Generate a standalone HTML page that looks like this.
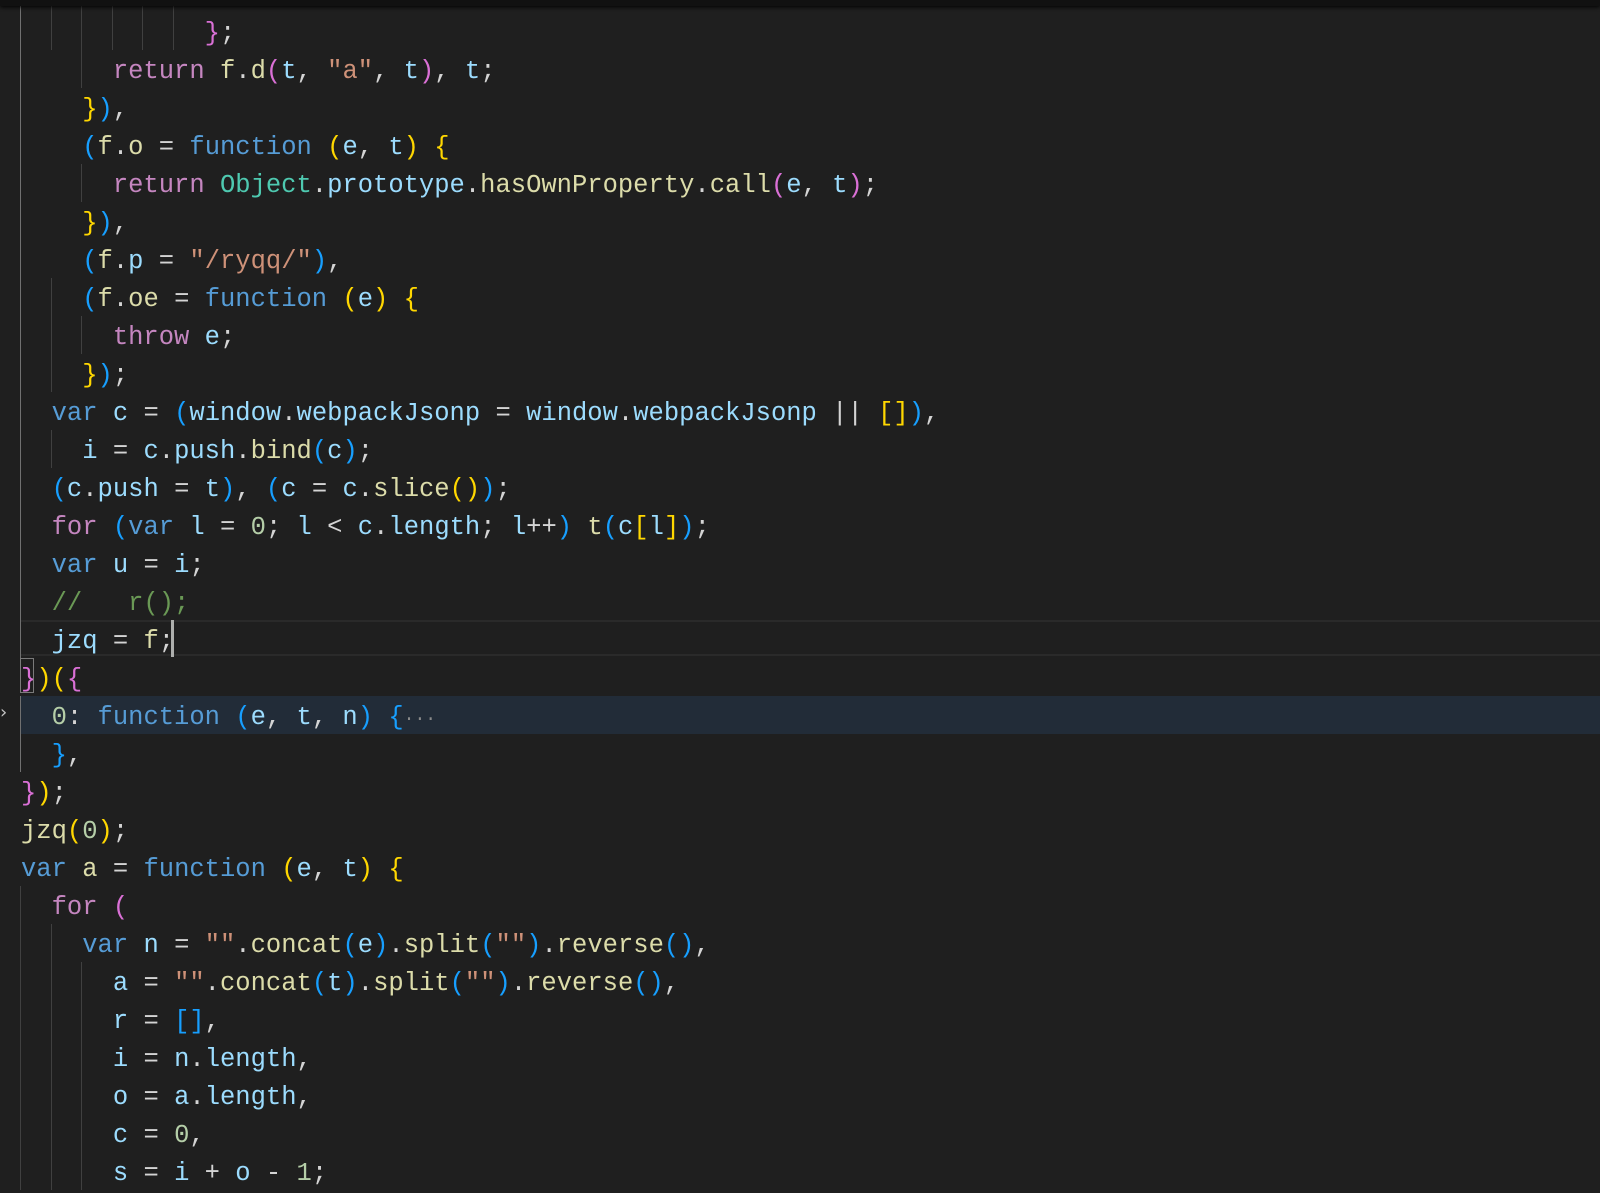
<!DOCTYPE html>
<html><head><meta charset="utf-8">
<style>
html,body{margin:0;padding:0;background:#1f1f1f;width:1600px;height:1172px;overflow:hidden}
#topbar{position:absolute;left:0;top:0;width:1600px;height:6px;background:#111;box-shadow:0 1px 4px #000}
.l{position:absolute;left:21px;height:38px;line-height:38px;font-family:"Liberation Mono",monospace;font-size:25.5px;color:#d4d4d4;white-space:pre;margin-top:3px}
.g{position:absolute;width:1px;background:#404040}
.ga{background:#707070}
.k{color:#c586c0}.s{color:#569cd6}.v{color:#9cdcfe}.f{color:#dcdcaa}.st{color:#ce9178}.n{color:#b5cea8}.c{color:#6a9955}.o{color:#4ec9b0}
.y{color:#ffd700}.p{color:#da70d6}.b{color:#179fff}
</style></head><body>
<div style="position:absolute;left:20px;top:696px;width:1580px;height:38px;background:#222c38"></div>
<div style="position:absolute;left:21px;top:620px;width:1579px;height:2px;background:#2a2a2a"></div>
<div style="position:absolute;left:21px;top:654px;width:1579px;height:2px;background:#2a2a2a"></div>
<div id="guides"></div>
<div id="code"></div>
<div style="position:absolute;left:20px;top:658px;width:12px;height:33px;border:1px solid #7a7a7a"></div>
<div style="position:absolute;left:171px;top:620px;width:3px;height:37px;background:#aeafad"></div>
<div style="position:absolute;left:0;top:702px;color:#c5c5c5;font-family:'DejaVu Sans',sans-serif;font-size:18px">›</div>
<div id="topbar"></div>
<script>
(function(){
var L=[
[[0,1,2,3,4,5],'            <span class="p">}</span>;'],
[[0,2],'      <span class="k">return</span> <span class="f">f</span>.<span class="f">d</span><span class="p">(</span><span class="v">t</span>, <span class="st">"a"</span>, <span class="v">t</span><span class="p">)</span>, <span class="v">t</span>;'],
[[0],'    <span class="y">}</span><span class="b">)</span>,'],
[[0],'    <span class="b">(</span><span class="f">f</span>.<span class="f">o</span> = <span class="s">function</span> <span class="y">(</span><span class="v">e</span>, <span class="v">t</span><span class="y">)</span> <span class="y">{</span>'],
[[0,2],'      <span class="k">return</span> <span class="o">Object</span>.<span class="v">prototype</span>.<span class="f">hasOwnProperty</span>.<span class="f">call</span><span class="p">(</span><span class="v">e</span>, <span class="v">t</span><span class="p">)</span>;'],
[[0],'    <span class="y">}</span><span class="b">)</span>,'],
[[0],'    <span class="b">(</span><span class="f">f</span>.<span class="v">p</span> = <span class="st">"/ryqq/"</span><span class="b">)</span>,'],
[[0,1],'    <span class="b">(</span><span class="f">f</span>.<span class="f">oe</span> = <span class="s">function</span> <span class="y">(</span><span class="v">e</span><span class="y">)</span> <span class="y">{</span>'],
[[0,1,2],'      <span class="k">throw</span> <span class="v">e</span>;'],
[[0,1],'    <span class="y">}</span><span class="b">)</span>;'],
[[0],'  <span class="s">var</span> <span class="v">c</span> = <span class="b">(</span><span class="v">window</span>.<span class="v">webpackJsonp</span> = <span class="v">window</span>.<span class="v">webpackJsonp</span> || <span class="y">[]</span><span class="b">)</span>,'],
[[0,1],'    <span class="v">i</span> = <span class="v">c</span>.<span class="v">push</span>.<span class="f">bind</span><span class="b">(</span><span class="v">c</span><span class="b">)</span>;'],
[[0],'  <span class="b">(</span><span class="v">c</span>.<span class="v">push</span> = <span class="v">t</span><span class="b">)</span>, <span class="b">(</span><span class="v">c</span> = <span class="v">c</span>.<span class="f">slice</span><span class="y">()</span><span class="b">)</span>;'],
[[0],'  <span class="k">for</span> <span class="b">(</span><span class="s">var</span> <span class="v">l</span> = <span class="n">0</span>; <span class="v">l</span> &lt; <span class="v">c</span>.<span class="v">length</span>; <span class="v">l</span>++<span class="b">)</span> <span class="f">t</span><span class="b">(</span><span class="v">c</span><span class="y">[</span><span class="v">l</span><span class="y">]</span><span class="b">)</span>;'],
[[0],'  <span class="s">var</span> <span class="v">u</span> = <span class="v">i</span>;'],
[[0],'  <span class="c">//   r();</span>'],
[[0],'  <span class="v">jzq</span> = <span class="f">f</span>;'],
[[],'<span class="p">}</span><span class="y">)(</span><span class="p">{</span>'],
[[0],'  <span class="n">0</span>: <span class="s">function</span> <span class="b">(</span><span class="v">e</span>, <span class="v">t</span>, <span class="v">n</span><span class="b">)</span> <span class="b">{</span><span style="color:#8a8a8a;font-size:18px">···</span>'],
[[0],'  <span class="b">}</span>,'],
[[],'<span class="p">}</span><span class="y">)</span>;'],
[[],'<span class="f">jzq</span><span class="y">(</span><span class="n">0</span><span class="y">)</span>;'],
[[],'<span class="s">var</span> <span class="f">a</span> = <span class="s">function</span> <span class="y">(</span><span class="v">e</span>, <span class="v">t</span><span class="y">)</span> <span class="y">{</span>'],
[[0],'  <span class="k">for</span> <span class="p">(</span>'],
[[0,1],'    <span class="s">var</span> <span class="v">n</span> = <span class="st">""</span>.<span class="f">concat</span><span class="b">(</span><span class="v">e</span><span class="b">)</span>.<span class="f">split</span><span class="b">(</span><span class="st">""</span><span class="b">)</span>.<span class="f">reverse</span><span class="b">()</span>,'],
[[0,1,2],'      <span class="v">a</span> = <span class="st">""</span>.<span class="f">concat</span><span class="b">(</span><span class="v">t</span><span class="b">)</span>.<span class="f">split</span><span class="b">(</span><span class="st">""</span><span class="b">)</span>.<span class="f">reverse</span><span class="b">()</span>,'],
[[0,1,2],'      <span class="v">r</span> = <span class="b">[]</span>,'],
[[0,1,2],'      <span class="v">i</span> = <span class="v">n</span>.<span class="v">length</span>,'],
[[0,1,2],'      <span class="v">o</span> = <span class="v">a</span>.<span class="v">length</span>,'],
[[0,1,2],'      <span class="v">c</span> = <span class="n">0</span>,'],
[[0,1,2],'      <span class="v">s</span> = <span class="v">i</span> + <span class="v">o</span> - <span class="n">1</span>;']
];
var code='',gd='';
for(var i=0;i<L.length;i++){
 var ty=12+38*i;
 code+='<div class="l" style="top:'+ty+'px">'+L[i][1]+'</div>';
 var ks=L[i][0];
 for(var j=0;j<ks.length;j++){
  var k=ks[j];
  var act=(k==0&&i<=19);
  var t0=(i==0)?6:ty, h=(i==0)?44:38;
  if(k==0&&i==17) continue;
  gd+='<div class="g'+(act?' ga':'')+'" style="left:'+Math.round(20+30.6*k)+'px;top:'+t0+'px;height:'+h+'px"></div>';
 }
}
document.getElementById('code').innerHTML=code;
document.getElementById('guides').innerHTML=gd;
})();
</script>
</body></html>
